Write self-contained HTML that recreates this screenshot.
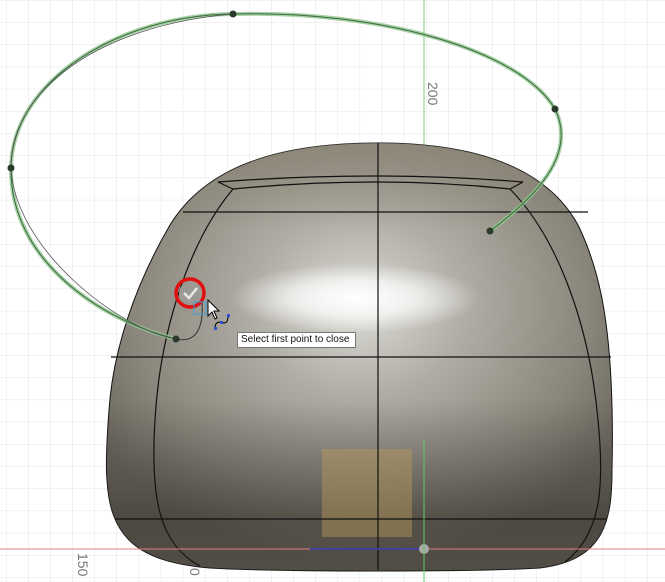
<!DOCTYPE html>
<html><head><style>
html,body{margin:0;padding:0;width:665px;height:582px;overflow:hidden;background:#fff;font-family:"Liberation Sans",sans-serif}
.tip{position:absolute;left:237px;top:332px;width:114px;height:14px;background:#fff;border:1px solid #777;font-size:10px;line-height:14px;padding-left:3px;color:#111;white-space:nowrap;box-sizing:content-box}
</style></head><body>
<svg width="665" height="582" style="position:absolute;left:0;top:0">
<defs>
<pattern id="g" x="6" y="0" width="22.1" height="22.2" patternUnits="userSpaceOnUse">
<path d="M0 0V22.2M0 0H22.1" stroke="#e4e4e4" stroke-width="1" fill="none"/>
</pattern>
<radialGradient id="b" cx="0.5" cy="0.38" r="0.6">
<stop offset="0" stop-color="#dcdbd6"/>
<stop offset="0.35" stop-color="#b0ada5"/>
<stop offset="0.75" stop-color="#8a867b"/>
<stop offset="1" stop-color="#6a665c"/>
</radialGradient>
<linearGradient id="v" x1="0" y1="0" x2="0" y2="1">
<stop offset="0" stop-color="#8a8373" stop-opacity="0.7"/>
<stop offset="0.2" stop-color="#8a8373" stop-opacity="0"/>
<stop offset="0.6" stop-color="#444" stop-opacity="0"/>
<stop offset="0.88" stop-color="#3a3630" stop-opacity="0.6"/>
<stop offset="1" stop-color="#3a3630" stop-opacity="0.5"/>
</linearGradient>
<radialGradient id="h" cx="0.5" cy="0.5" r="0.5">
<stop offset="0" stop-color="#fff" stop-opacity="1"/>
<stop offset="0.5" stop-color="#fff" stop-opacity="0.7"/>
<stop offset="1" stop-color="#fff" stop-opacity="0"/>
</radialGradient>
</defs>
<rect width="665" height="582" fill="url(#g)"/>
<line x1="424" y1="0" x2="424" y2="582" stroke="#7bd47b" stroke-width="1"/>
<text x="0" y="0" font-size="14" fill="#777" transform="translate(428,82) rotate(90)">200</text>
<path d="M378 143 C275 143 205 168 170 225 C135 285 113 350 109 410 C106 450 106 470 107 480 C110 535 135 562 210 568 C280 572 470 572 540 568 C605 560 612 520 612 470 C613 430 612 400 611 380 C608 320 600 270 578 225 C545 165 470 143 378 143 Z" fill="url(#b)" stroke="#111" stroke-width="1"/>
<path d="M378 143 C275 143 205 168 170 225 C135 285 113 350 109 410 C106 450 106 470 107 480 C110 535 135 562 210 568 C280 572 470 572 540 568 C605 560 612 520 612 470 C613 430 612 400 611 380 C608 320 600 270 578 225 C545 165 470 143 378 143 Z" fill="url(#v)"/>
<ellipse cx="355" cy="298" rx="125" ry="35" fill="url(#h)"/>
<rect x="322" y="449" width="90" height="88" fill="#b89a5a" opacity="0.45"/>
<g stroke="#111" stroke-width="1.2" fill="none">
<line x1="378" y1="143" x2="378" y2="570"/>
<path d="M218 182 Q378 170 523 182"/>
<path d="M233 189 Q378 175 510 189"/>
<path d="M218 182 L233 189 M523 182 L510 189"/>
<line x1="183" y1="212" x2="588" y2="212"/>
<line x1="111" y1="357" x2="611" y2="357"/>
<line x1="115" y1="519" x2="607" y2="519"/>
<path d="M233 189 C190 240 160 330 155 420 C150 500 160 545 200 566"/>
<path d="M510 189 C560 240 590 330 598 420 C605 490 600 535 565 562"/>
</g>
<line x1="0" y1="549" x2="665" y2="549" stroke="#e08080" stroke-width="1"/>
<line x1="310" y1="549" x2="420" y2="549" stroke="#4040a0" stroke-width="2"/>
<circle cx="424" cy="549" r="5" fill="#aaa"/>
<line x1="424" y1="440" x2="424" y2="582" stroke="#5ccc5c" stroke-width="1"/>
<text x="0" y="0" font-size="14" fill="#777" transform="translate(78,553) rotate(90)">150</text>
<text x="0" y="0" font-size="14" fill="#777" transform="translate(190,568) rotate(90)">0</text>
<path d="M176 339 C100 320 10 260 11 168 C12 80 120 15 233 14 C380 10 520 50 555 109 C575 150 545 190 490 231" fill="none" stroke="#8fc48f" stroke-width="4" opacity="0.8"/>
<path d="M176 339 C100 320 10 260 11 168 C12 80 120 15 233 14 C380 10 520 50 555 109 C575 150 545 190 490 231" fill="none" stroke="#3a6a3a" stroke-width="1"/>
<path d="M176 339 C120 330 15 250 11 168 C10 90 100 25 233 14" fill="none" stroke="#555" stroke-width="0.8"/>
<path d="M176 339 Q205 345 202 300" fill="none" stroke="#333" stroke-width="1"/>
<g fill="#2a3a2a">
<circle cx="233" cy="14" r="3.5"/><circle cx="555" cy="109" r="3.5"/>
<circle cx="11" cy="168" r="3.5"/><circle cx="176" cy="339" r="3.5"/><circle cx="490" cy="231" r="3.5"/>
</g>
<circle cx="190" cy="293" r="11" fill="#9c9a95"/>
<path d="M184 293 L189 298 L197 288" stroke="#e8e8e8" stroke-width="2.5" fill="none"/>
<circle cx="190" cy="293" r="14" fill="none" stroke="#e01010" stroke-width="3.5"/>
<rect x="194" y="302" width="12" height="12" fill="none" stroke="#39a0d8" stroke-width="1"/>
<path d="M208 300 L208 316 L212 312 L215 319 L217 318 L214 311 L219 311 Z" fill="#fff" stroke="#000" stroke-width="1"/>
<path d="M215 328 Q215 322 220 322 L224 323 Q228 323 228 316" fill="none" stroke="#000" stroke-width="1"/>
<rect x="214" y="327" width="3" height="3" fill="#3050d0"/><rect x="227" y="314" width="3" height="3" fill="#3050d0"/><rect x="220" y="321" width="3" height="3" fill="#3050d0"/>
</svg>
<div class="tip">Select first point to close</div>
</body></html>
